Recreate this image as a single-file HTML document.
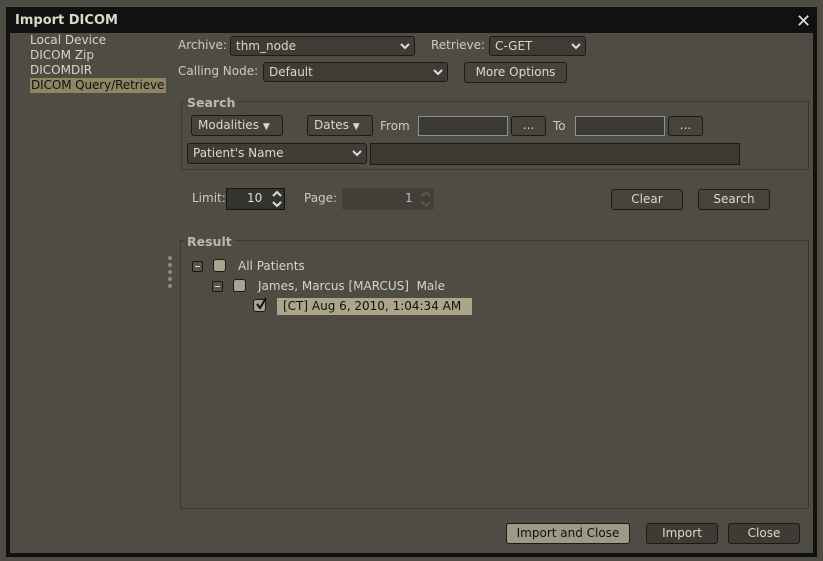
<!DOCTYPE html>
<html><head><style>
*{box-sizing:border-box;margin:0;padding:0}
body{width:823px;height:561px;background:#4f4c44;font-family:"DejaVu Sans","Liberation Sans",sans-serif;font-size:12px;color:#d8d4c4;position:relative;overflow:hidden}
.a{position:absolute;white-space:nowrap}
#dlg{position:absolute;left:6px;top:7px;width:811px;height:550px;border:4px solid #111;border-top:none;background:#4f4c44}
#title{position:absolute;left:6px;top:7px;width:811px;height:26px;background:#111;color:#ddd8c8;font-weight:bold;font-size:13px;padding:6px 0 0 9px}
.cb{position:absolute;height:20px;background:#3e3c35;border:1px solid #1c1b17;border-radius:3px;padding:2px 0 0 5px;color:#ddd8c8}
.cb svg{position:absolute;right:4px;top:5px}
.btn{position:absolute;height:21px;background:#45433b;border:1px solid #1c1b17;border-radius:3px;text-align:center;padding-top:2px;color:#ddd8c8}
.inp{position:absolute;height:20px;background:#3b3932;border:1px solid #8393a0}
.grp{position:absolute;border:1px solid #3b3933;border-left:1px solid #3a3832}
.lbl{color:#cfcbbb}
.gt{position:absolute;background:#4f4c44;padding:0 3px;font-weight:bold;color:#bdb9a9;font-size:12.5px}
.box{position:absolute;width:13px;height:13px;border:1px solid #1b1a16;border-radius:3px;background:#a9a38d}
.mn{position:absolute;width:11px;height:11px;border:1px solid #181714;background:#57544b;border-radius:2px}
.mn:after{content:"";position:absolute;left:2px;top:4px;width:5px;height:1px;background:#ddd8c8}
.dot{position:absolute;left:168px;width:4px;height:4px;border-radius:2px;background:#8d8a78}
</style></head><body>
<div id="dlg"></div>
<div id="title">Import DICOM</div>
<div class="a" style="left:796px;top:11px;font-size:18px;color:#ddd">✕</div>

<div class="a" style="left:30px;top:33px;line-height:15px;color:#d8d4c4">Local Device<br>DICOM Zip<br>DICOMDIR</div>
<div class="a" style="left:30px;top:78px;height:15px;line-height:15px;background:#8f8563;color:#111;padding:0 1px;width:136px;letter-spacing:-0.1px">DICOM Query/Retrieve</div>

<div class="a lbl" style="left:178px;top:38px">Archive:</div>
<div class="cb" style="left:230px;top:36px;width:185px">thm_node<svg width="10" height="8"><path d="M1 2l4 4 4-4" stroke="#ddd" stroke-width="2" fill="none"/></svg></div>
<div class="a lbl" style="left:431px;top:38px">Retrieve:</div>
<div class="cb" style="left:489px;top:36px;width:97px">C-GET<svg width="10" height="8"><path d="M1 2l4 4 4-4" stroke="#ddd" stroke-width="2" fill="none"/></svg></div>
<div class="a lbl" style="left:178px;top:64px">Calling Node:</div>
<div class="cb" style="left:263px;top:62px;width:185px">Default<svg width="10" height="8"><path d="M1 2l4 4 4-4" stroke="#ddd" stroke-width="2" fill="none"/></svg></div>
<div class="btn" style="left:464px;top:62px;width:103px">More Options</div>

<div class="grp" style="left:181px;top:101px;width:628px;height:69px"></div>
<div class="gt" style="left:184px;top:95px">Search</div>
<div class="btn" style="left:191px;top:115px;width:92px;text-align:left;padding-left:6px">Modalities <span style="font-size:9px">▼</span></div>
<div class="btn" style="left:307px;top:115px;width:66px;text-align:left;padding-left:6px">Dates <span style="font-size:9px">▼</span></div>
<div class="a lbl" style="left:380px;top:119px">From</div>
<div class="inp" style="left:418px;top:116px;width:90px"></div>
<div class="btn" style="left:511px;top:116px;width:35px;height:20px;padding-top:1px">...</div>
<div class="a lbl" style="left:553px;top:119px">To</div>
<div class="inp" style="left:575px;top:116px;width:90px"></div>
<div class="btn" style="left:668px;top:116px;width:35px;height:20px;padding-top:1px">...</div>
<div class="cb" style="left:187px;top:143px;width:180px;height:21px">Patient's Name<svg width="10" height="8"><path d="M1 2l4 4 4-4" stroke="#ddd" stroke-width="2" fill="none"/></svg></div>
<div class="a" style="left:370px;top:143px;width:370px;height:22px;background:#3b3932;border:1px solid #1c1b17"></div>

<div class="a lbl" style="left:192px;top:191px">Limit:</div>
<div class="a" style="left:226px;top:188px;width:59px;height:22px;background:#35332d;border:1px solid #151411;padding:2px 0 0 20px;color:#ddd">10</div>
<svg class="a" style="left:271px;top:190px" width="12" height="18"><path d="M2 6l4-4 4 4M2 12l4 4 4-4" stroke="#ddd" stroke-width="2" fill="none"/></svg>
<div class="a lbl" style="left:304px;top:191px">Page:</div>
<div class="a" style="left:342px;top:188px;width:92px;height:22px;background:#413f37;border:1px solid #45433b;padding:2px 0 0 62px;color:#bbb">1</div>
<svg class="a" style="left:420px;top:190px" width="12" height="18"><path d="M2 6l4-4 4 4M2 12l4 4 4-4" stroke="#5a574e" stroke-width="2" fill="none"/></svg>
<div class="btn" style="left:611px;top:189px;width:72px">Clear</div>
<div class="btn" style="left:698px;top:189px;width:72px">Search</div>

<div class="grp" style="left:180px;top:240px;width:629px;height:269px"></div>
<div class="gt" style="left:184px;top:234px">Result</div>
<div class="dot" style="top:256px"></div><div class="dot" style="top:263px"></div><div class="dot" style="top:270px"></div><div class="dot" style="top:277px"></div><div class="dot" style="top:284px"></div>
<div class="mn" style="left:192px;top:261px"></div>
<div class="box" style="left:213px;top:259px"></div>
<div class="a" style="left:238px;top:259px">All Patients</div>
<div class="mn" style="left:212px;top:281px"></div>
<div class="box" style="left:233px;top:279px"></div>
<div class="a" style="left:258px;top:279px">James, Marcus [MARCUS]&nbsp; Male</div>
<div class="box" style="left:253px;top:299px"></div>
<svg class="a" style="left:254px;top:297px" width="14" height="14"><path d="M3 7l3 4 6-10" stroke="#111" stroke-width="2" fill="none"/></svg>
<div class="a" style="left:277px;top:298px;height:17px;width:195px;background:#ada58b;color:#111;padding:1px 0 0 6px">[CT] Aug 6, 2010, 1:04:34 AM</div>

<div class="btn" style="left:506px;top:523px;width:124px;background:#9c9984;color:#111">Import and Close</div>
<div class="btn" style="left:646px;top:523px;width:72px;background:#3d3b34">Import</div>
<div class="btn" style="left:728px;top:523px;width:72px;background:#3d3b34">Close</div>
</body></html>
